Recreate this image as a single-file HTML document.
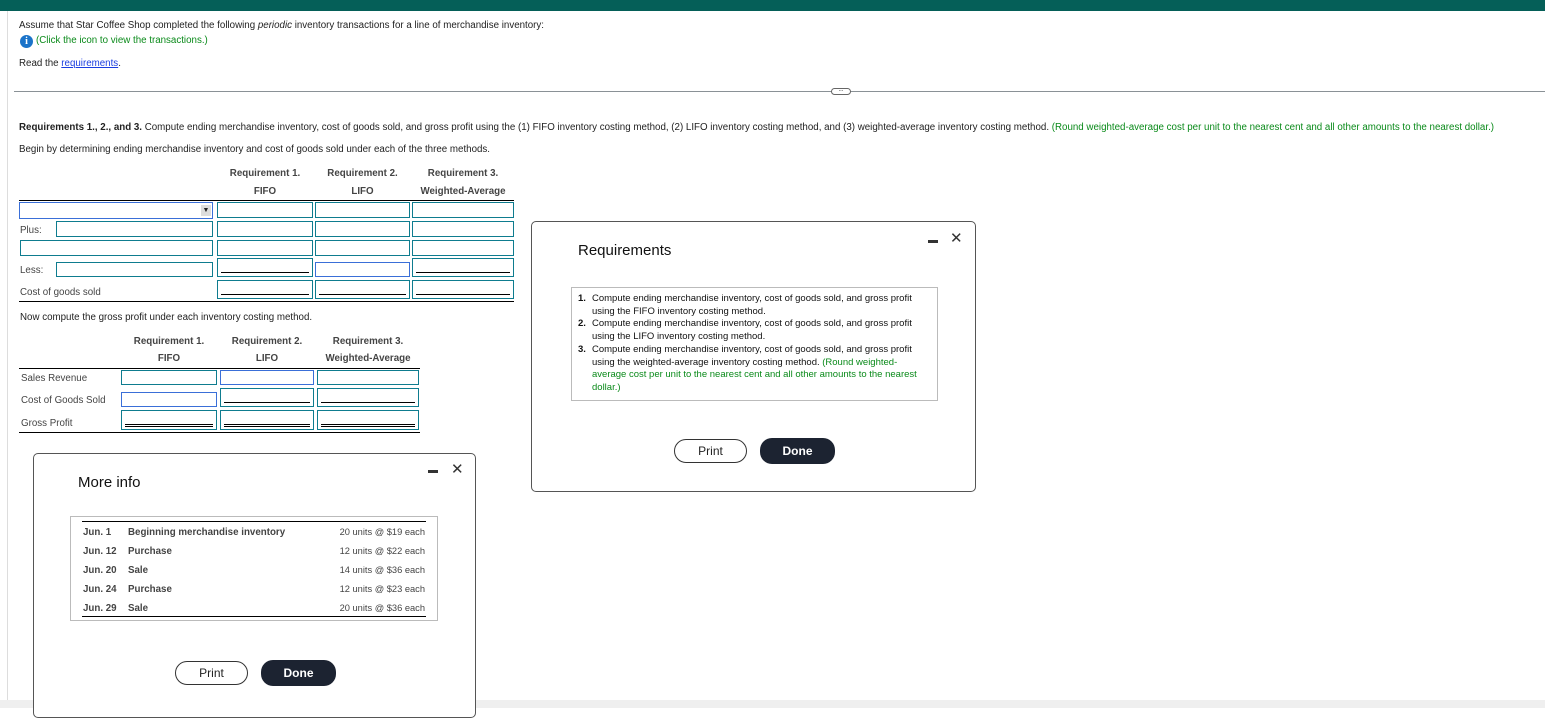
<!DOCTYPE html>
<html><head><style>
*{margin:0;padding:0;box-sizing:border-box}
body{width:1545px;height:708px;overflow:hidden;background:#fff;font-family:"Liberation Sans",Arial,sans-serif;font-size:9.75px;color:#222;position:relative}
.a{position:absolute;white-space:nowrap}
.in{position:absolute;border:1px solid #0e7c8f;background:#fff}
.hd{position:absolute;font-weight:bold;color:#444;text-align:center;font-size:9.75px}
.ul{position:absolute;left:3px;right:3px;bottom:3px;border-top:1px solid #000}
.dl{position:absolute;left:3px;right:3px;bottom:2px;height:3px;border-top:1px solid #000;border-bottom:1px solid #000}
.dlg{position:absolute;background:#fff;border:1px solid #555;border-radius:5px}
.btn{position:absolute;height:24px;border-radius:12px;font-size:12px;text-align:center;line-height:22px}
.pr{border:1.5px solid #333;background:#fff;color:#222}
.dn{background:#1c2331;color:#fff;font-weight:bold}
.g{color:#0a8a1a}
</style></head><body>
<div class="a" style="left:0;top:0;width:1545px;height:11px;background:#055f58"></div>
<div class="a" style="left:7px;top:11px;width:1px;height:697px;background:#ddd"></div>
<div class="a" style="left:0;top:700px;width:1545px;height:8px;background:#efefef"></div>

<div class="a" style="left:19px;top:20px">Assume that Star Coffee Shop completed the following <i>periodic</i> inventory transactions for a line of merchandise inventory:</div>
<div class="a" style="left:20px;top:35px;width:13px;height:13px;border-radius:50%;background:#1a73c9;color:#fff;font-weight:bold;font-size:10px;text-align:center;line-height:13px;font-family:'Liberation Serif',serif">i</div>
<div class="a g" style="left:36px;top:35px">(Click the icon to view the transactions.)</div>
<div class="a" style="left:19px;top:58px">Read the <span style="color:#1a3de0;text-decoration:underline">requirements</span>.</div>
<div class="a" style="left:14px;top:91px;width:1531px;height:1px;background:#8a9196"></div>
<div class="a" style="left:831px;top:88px;width:20px;height:7px;border:1px solid #666;border-radius:4px;background:#fff;font-size:6px;line-height:3px;text-align:center">...</div>

<div class="a" style="left:19px;top:122px"><b>Requirements 1., 2., and 3.</b> Compute ending merchandise inventory, cost of goods sold, and gross profit using the (1) FIFO inventory costing method, (2) LIFO inventory costing method, and (3) weighted-average inventory costing method. <span class="g">(Round weighted-average cost per unit to the nearest cent and all other amounts to the nearest dollar.)</span></div>
<div class="a" style="left:19px;top:144px">Begin by determining ending merchandise inventory and cost of goods sold under each of the three methods.</div>

<div class="hd" style="left:217px;width:96px;top:168px">Requirement 1.</div>
<div class="hd" style="left:315px;width:95px;top:168px">Requirement 2.</div>
<div class="hd" style="left:412px;width:102px;top:168px">Requirement 3.</div>
<div class="hd" style="left:217px;width:96px;top:186px">FIFO</div>
<div class="hd" style="left:315px;width:95px;top:186px">LIFO</div>
<div class="hd" style="left:412px;width:102px;top:186px">Weighted-Average</div>
<div class="a" style="left:19px;top:200px;width:495px;height:1px;background:#000"></div>
<div class="in" style="left:19px;top:202px;width:194px;height:17px;border-color:#3a6fd8"><div style="position:absolute;right:1px;top:2px;width:10px;height:11px;background:#ddd;font-size:7px;text-align:center;line-height:11px">▼</div></div>
<div class="a" style="left:20px;top:225px;color:#444">Plus:</div>
<div class="in" style="left:56px;top:221px;width:157px;height:16px"></div>
<div class="in" style="left:20px;top:240px;width:193px;height:16px"></div>
<div class="a" style="left:20px;top:265px;color:#444">Less:</div>
<div class="in" style="left:56px;top:262px;width:157px;height:15px"></div>
<div class="a" style="left:20px;top:287px;color:#444">Cost of goods sold</div>
<div class="in" style="left:217px;top:202px;width:96px;height:16px"></div>
<div class="in" style="left:315px;top:202px;width:95px;height:16px"></div>
<div class="in" style="left:412px;top:202px;width:102px;height:16px"></div>
<div class="in" style="left:217px;top:221px;width:96px;height:16px"></div>
<div class="in" style="left:315px;top:221px;width:95px;height:16px"></div>
<div class="in" style="left:412px;top:221px;width:102px;height:16px"></div>
<div class="in" style="left:217px;top:240px;width:96px;height:16px"></div>
<div class="in" style="left:315px;top:240px;width:95px;height:16px"></div>
<div class="in" style="left:412px;top:240px;width:102px;height:16px"></div>
<div class="in" style="left:217px;top:258px;width:96px;height:19px"><div class="ul"></div></div>
<div class="in" style="left:315px;top:262px;width:95px;height:15px;border-color:#3a6fd8"></div>
<div class="in" style="left:412px;top:258px;width:102px;height:19px"><div class="ul"></div></div>
<div class="in" style="left:217px;top:280px;width:96px;height:19px"><div class="ul"></div></div>
<div class="in" style="left:315px;top:280px;width:95px;height:19px"><div class="ul"></div></div>
<div class="in" style="left:412px;top:280px;width:102px;height:19px"><div class="ul"></div></div>
<div class="a" style="left:19px;top:301px;width:495px;height:1px;background:#000"></div>

<div class="a" style="left:20px;top:312px">Now compute the gross profit under each inventory costing method.</div>
<div class="hd" style="left:121px;width:96px;top:336px">Requirement 1.</div>
<div class="hd" style="left:220px;width:94px;top:336px">Requirement 2.</div>
<div class="hd" style="left:317px;width:102px;top:336px">Requirement 3.</div>
<div class="hd" style="left:121px;width:96px;top:353px">FIFO</div>
<div class="hd" style="left:220px;width:94px;top:353px">LIFO</div>
<div class="hd" style="left:317px;width:102px;top:353px">Weighted-Average</div>
<div class="a" style="left:19px;top:368px;width:401px;height:1px;background:#000"></div>
<div class="a" style="left:21px;top:373px;color:#444">Sales Revenue</div>
<div class="a" style="left:21px;top:395px;color:#444">Cost of Goods Sold</div>
<div class="a" style="left:21px;top:418px;color:#444">Gross Profit</div>
<div class="in" style="left:121px;top:370px;width:96px;height:15px"></div>
<div class="in" style="left:220px;top:370px;width:94px;height:15px;border-color:#3a6fd8"></div>
<div class="in" style="left:317px;top:370px;width:102px;height:15px"></div>
<div class="in" style="left:121px;top:392px;width:96px;height:15px;border-color:#3a6fd8"></div>
<div class="in" style="left:220px;top:388px;width:94px;height:19px"><div class="ul"></div></div>
<div class="in" style="left:317px;top:388px;width:102px;height:19px"><div class="ul"></div></div>
<div class="in" style="left:121px;top:410px;width:96px;height:20px"><div class="dl"></div></div>
<div class="in" style="left:220px;top:410px;width:94px;height:20px"><div class="dl"></div></div>
<div class="in" style="left:317px;top:410px;width:102px;height:20px"><div class="dl"></div></div>
<div class="a" style="left:19px;top:432px;width:401px;height:1px;background:#000"></div>

<div class="dlg" style="left:33px;top:453px;width:443px;height:265px">
<div class="a" style="left:44px;top:20px;font-size:15px;color:#111">More info</div>
<div class="a" style="left:394px;top:16px;width:10px;height:3px;background:#333"></div>
<div class="a" style="left:417px;top:6px;font-size:15px;color:#333">✕</div>
<div class="a" style="left:36px;top:62px;width:368px;height:105px;border:1px solid #bbb">
 <div class="a" style="left:11px;top:4px;width:344px;height:1px;background:#000"></div>
 <div class="a" style="left:11px;top:99px;width:344px;height:1px;background:#000"></div>
 <div class="a" style="left:12px;top:6px;font-weight:bold;color:#444;line-height:19px">Jun. 1<br>Jun. 12<br>Jun. 20<br>Jun. 24<br>Jun. 29</div>
 <div class="a" style="left:57px;top:6px;font-weight:bold;color:#444;line-height:19px">Beginning merchandise inventory<br>Purchase<br>Sale<br>Purchase<br>Sale</div>
 <div class="a" style="right:12px;top:6px;color:#444;line-height:19px;font-size:9.3px;text-align:right">20 units @ $19 each<br>12 units @ $22 each<br>14 units @ $36 each<br>12 units @ $23 each<br>20 units @ $36 each</div>
</div>
<div class="btn pr" style="left:141px;top:207px;width:73px">Print</div>
<div class="btn dn" style="left:227px;top:206px;width:75px;height:26px;line-height:26px">Done</div>
</div>

<div class="dlg" style="left:531px;top:221px;width:445px;height:271px">
<div class="a" style="left:46px;top:20px;font-size:15px;color:#111">Requirements</div>
<div class="a" style="left:396px;top:18px;width:10px;height:3px;background:#333"></div>
<div class="a" style="left:418px;top:7px;font-size:15px;color:#333">✕</div>
<div class="a" style="left:39px;top:65px;width:367px;height:114px;border:1px solid #bbb;white-space:normal;color:#111">
 <div class="a" style="left:6px;top:5px;line-height:12.7px;font-weight:bold;font-size:9.5px">1.<br><br>2.<br><br>3.</div>
 <div class="a" style="left:20px;top:5px;line-height:12.7px;width:335px;white-space:normal;font-size:9.5px">Compute ending merchandise inventory, cost of goods sold, and gross profit using the FIFO inventory costing method.<br>Compute ending merchandise inventory, cost of goods sold, and gross profit using the LIFO inventory costing method.<br>Compute ending merchandise inventory, cost of goods sold, and gross profit using the weighted-average inventory costing method. <span class="g">(Round weighted-average cost per unit to the nearest cent and all other amounts to the nearest dollar.)</span></div>
</div>
<div class="btn pr" style="left:142px;top:217px;width:73px">Print</div>
<div class="btn dn" style="left:228px;top:216px;width:75px;height:26px;line-height:26px">Done</div>
</div>
</body></html>
